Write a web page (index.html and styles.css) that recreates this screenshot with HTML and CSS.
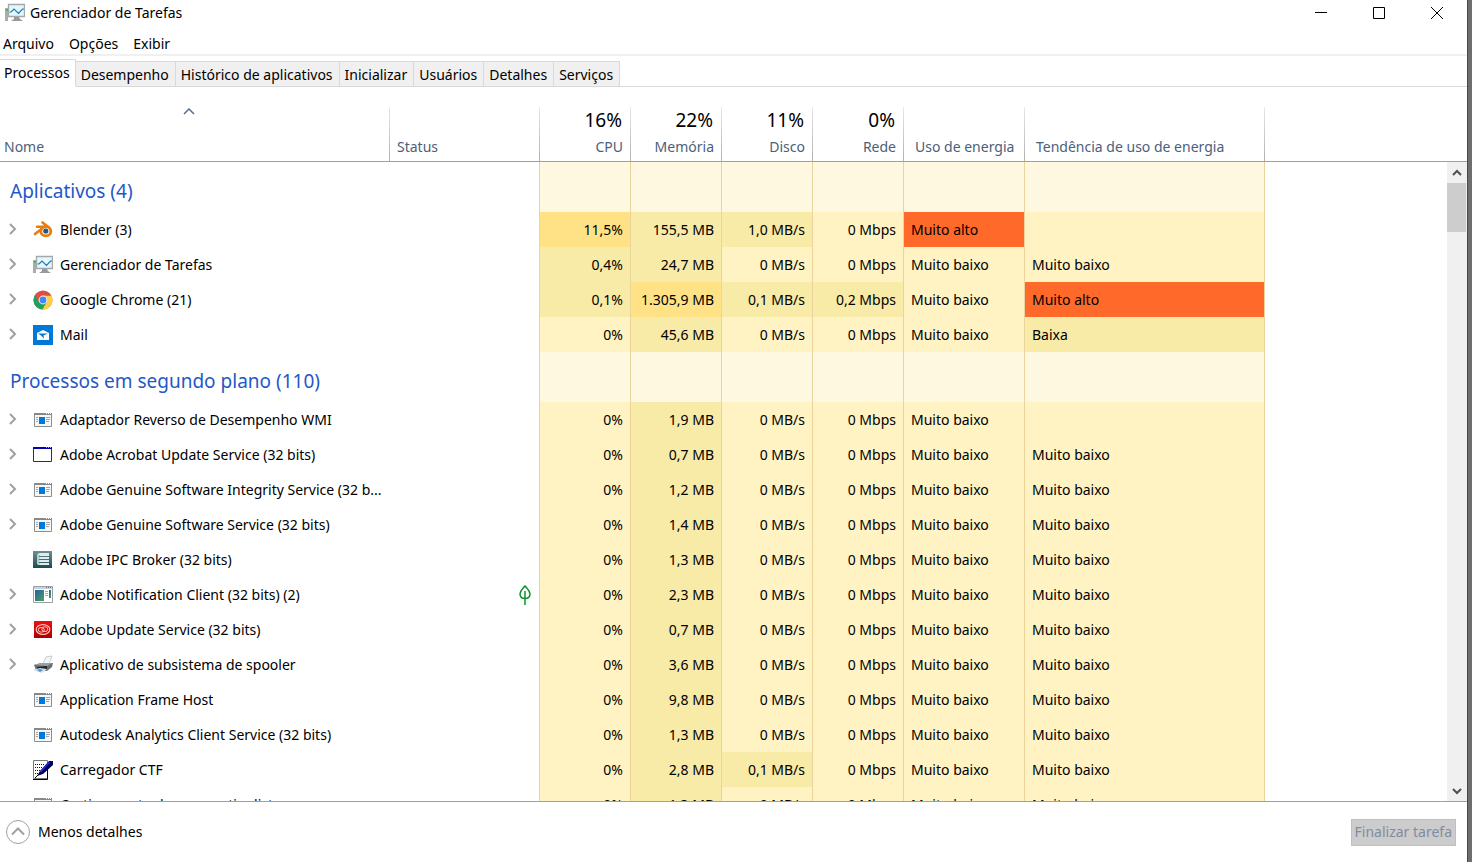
FILE: index.html
```html
<!DOCTYPE html>
<html lang="pt-BR">
<head>
  <meta charset="UTF-8">
  <meta name="viewport" content="width=device-width, initial-scale=1.0">
  <title>Gerenciador de Tarefas</title>
  <link rel="stylesheet" href="styles.css">
</head>
<body>
  <!-- Icon set -->
  <svg class="defs" width="0" height="0" aria-hidden="true">
    <linearGradient id="teal" x1="0" y1="0" x2="0" y2="1">
      <stop offset="0" stop-color="#6b9094"/><stop offset="1" stop-color="#214a50"/>
    </linearGradient>
    <linearGradient id="bluegreen" x1="0" y1="0" x2="1" y2="1">
      <stop offset="0" stop-color="#2560a8"/><stop offset="1" stop-color="#4ba05a"/>
    </linearGradient>
    <linearGradient id="red" x1="0" y1="0" x2="0" y2="1">
      <stop offset="0" stop-color="#f01010"/><stop offset="1" stop-color="#a80000"/>
    </linearGradient>

    <symbol id="chevron" viewBox="0 0 8 12">
      <path d="M1.500 1 6.500 6l-5 5" fill="none" stroke="#a0a0a0" stroke-width="2"/>
    </symbol>
    <symbol id="taskmgr" viewBox="0 0 20 20">
      <path d="M0 5h3v13H0z" fill="#a9adb0"/>
      <path d="M1 6h2v2H1z" fill="#35c135"/>
      <path d="M3.500 1.500h16v12h-16z" fill="#e6f6fd" stroke="#a4a8ab" stroke-width="1.400"/>
      <path d="M9 14h5l1 2 3 2H6l3-2z" fill="#969a9d"/>
      <path d="M4.500 9h1.500l3-3 4.500 4.500 4-4.500h1.500" fill="none" stroke="#187fb5" stroke-width="1.200"/>
    </symbol>
    <symbol id="blender" viewBox="0 0 20 20">
      <ellipse cx="12.800" cy="11.300" rx="5" ry="4.600" fill="#fff" stroke="#e87d0d" stroke-width="2.800"/>
      <path d="M9.500 2.500 16 7.500M4 6.800h9.500M2 14 9.500 8.200" fill="none" stroke="#e87d0d" stroke-width="2.600" stroke-linecap="round"/>
      <circle cx="12.800" cy="11" r="2.600" fill="#235785"/>
    </symbol>
    <symbol id="chrome" viewBox="0 0 20 20">
      <circle cx="10" cy="10" r="9.500" fill="#dd4f43"/>
      <path d="M1.800 5.200A9.500 9.500 0 0 0 9.300 19.500L13.700 12.200 10 10 5.800 12z" fill="#1da160"/>
      <path d="M9.300 19.500A9.500 9.500 0 0 0 18.500 5.800H10L13.700 12.200z" fill="#ffce44"/>
      <circle cx="10" cy="10" r="4.400" fill="#f1f1f1"/>
      <circle cx="10" cy="10" r="3.400" fill="#4587f3"/>
    </symbol>
    <symbol id="mail" viewBox="0 0 20 20">
      <path d="M0 0h20v20H0z" fill="#0078d7"/>
      <path d="M4 8 10 5l6 3v7H4z" fill="#fff"/>
      <path d="M5 8.500h10l-4.500 2 .5 3-3-3z" fill="#0078d7"/>
    </symbol>
    <symbol id="app" viewBox="0 0 20 20">
      <path d="M1.500 3.500h17v13h-17z" fill="#f7f7f7" stroke="#8b8f92"/>
      <path d="M1 3h18v2H1z" fill="#85898c"/>
      <path d="M13 3h1v1h-1zM15 3h1v1h-1zM17 3h1v1h-1z" fill="#fff"/>
      <path d="M6 7h6v7H6z" fill="#0078d7"/>
      <path d="M3 7.500h2M3 9.500h2M3 11.500h2M13 7.500h4M13 9.500h4M13 11.500h3" stroke="#a0a4a6"/>
    </symbol>
    <symbol id="window" viewBox="0 0 20 20">
      <path d="M.5 2.500h18v14H.5z" fill="#fff" stroke="#26268c"/>
      <path d="M0 2h19v2H0z" fill="#0000b8"/>
      <path d="M13 2h1v1h-1zM15 2h1v1h-1zM17 2h1v1h-1z" fill="#8fb4ff"/>
    </symbol>
    <symbol id="broker" viewBox="0 0 20 20">
      <path d="M0 1h19v17H0z" fill="url(#teal)"/>
      <path d="m4 4 3-1h9v3H7zM4 8l3-1h9v2H7zM4 11l3-1h9v2H7zM4 14l3-1h9v2H7z" fill="#e0ecec"/>
      <path d="M4 4v10l2 1V5z" fill="#b5cccc"/>
    </symbol>
    <symbol id="notify" viewBox="0 0 20 20">
      <path d="M.5 1.500h19v16H.5z" fill="#fff" stroke="#9aa0a6"/>
      <path d="M1 2h18v2H1z" fill="#c8d3df"/>
      <path d="M13 2h1v1h-1zM15 2h1v1h-1zM17 2h1v1h-1z" fill="#587498"/>
      <path d="M2 5h9v11H2z" fill="url(#bluegreen)"/>
      <path d="M12 6.500h3M12 8.500h3M12 10.500h3" stroke="#a9a9a9"/>
      <path d="M16 5h2v8h-2z" fill="url(#bluegreen)"/>
    </symbol>
    <symbol id="cloud" viewBox="0 0 20 20">
      <path d="M1 1h18v17H1z" fill="url(#red)"/>
      <ellipse cx="10" cy="9.500" rx="6.800" ry="4.800" fill="none" stroke="#ffc3bd" stroke-width="1.200"/>
      <ellipse cx="8.300" cy="9.800" rx="3" ry="2.400" fill="none" stroke="#ffc3bd"/>
      <ellipse cx="11.800" cy="9.200" rx="3" ry="2.400" fill="none" stroke="#ffc3bd"/>
    </symbol>
    <symbol id="printer" viewBox="0 0 20 20">
      <path d="m10 9 3-7 6-1-3 8z" fill="#f4f6f7" stroke="#b5b9bd" stroke-width=".7"/>
      <path d="m1 10 7-2h12l-1 4-5 4-11-1z" fill="#6a6f74"/>
      <path d="m1 10 7-2h11l-5 3z" fill="#9ba0a4"/>
      <path d="m4 12 10-1v3l-9 1z" fill="#202428"/>
      <path d="m0 15 7-2 7 1-5 4z" fill="#d6dde2"/>
      <path d="m4 15 3-1 3 1-3 2z" fill="#4398d8"/>
    </symbol>
    <symbol id="ctf" viewBox="0 0 20 20">
      <path d="M.5.5h14v18H.5z" fill="#fff" stroke="#777"/>
      <path d="M0 19.500h14.500V9" fill="none" stroke="#000"/>
      <path d="M2 4.500h10M2 7.500h8M2 10.500h5M2 13.500h3" stroke="#111" stroke-dasharray="1 1"/>
      <path d="m4 16 3-5 9-10h4v4l-10 9z" fill="#000050"/>
      <path d="m7.500 12 9-10" stroke="#2828f0" stroke-width="1.500"/>
      <path d="m2 18 3-3" stroke="#000"/>
    </symbol>
    <symbol id="leaf" viewBox="0 0 14 20">
      <path d="M7 1C4.500 4 2 5.500 2 9c0 3 2 4.500 5 4.500s5-1.500 5-4.500c0-3.500-2.500-5-5-8zM7 6v14" fill="none" stroke="#0c9431" stroke-width="1.500"/>
    </symbol>
  </svg>

  <div class="window">
    <header class="titlebar">
      <svg class="icon"><use href="#taskmgr"/></svg>
      <h1>Gerenciador de Tarefas</h1>
      <div class="controls">
        <button aria-label="Minimizar"><svg width="12" height="12"><path d="M0 5.500h12"/></svg></button>
        <button aria-label="Maximizar"><svg width="12" height="12"><path d="M.5.5h11v11H.5z"/></svg></button>
        <button aria-label="Fechar"><svg width="12" height="12"><path d="m0 0 12 12M12 0 0 12"/></svg></button>
      </div>
    </header>

    <nav class="menu">
      <button>Arquivo</button>
      <button>Opções</button>
      <button>Exibir</button>
    </nav>

    <div class="tabs" role="tablist">
      <button class="tab active" role="tab" aria-selected="true">Processos</button>
      <button class="tab" role="tab">Desempenho</button>
      <button class="tab" role="tab">Histórico de aplicativos</button>
      <button class="tab" role="tab">Inicializar</button>
      <button class="tab" role="tab">Usuários</button>
      <button class="tab" role="tab">Detalhes</button>
      <button class="tab" role="tab">Serviços</button>
    </div>

    <main class="pane">
      <div class="list">
        <table>
          <colgroup>
            <col class="c-name"><col class="c-status"><col class="c-num"><col class="c-num"><col class="c-num"><col class="c-num"><col class="c-power"><col class="c-trend"><col>
          </colgroup>
          <thead>
            <tr>
              <th class="sorted"><span class="total"><svg width="12" height="7"><path d="m1 6 5-5 5 5"/></svg></span>Nome</th>
              <th class="status"><span class="total"></span>Status</th>
              <th class="num"><span class="total">16%</span>CPU</th>
              <th class="num"><span class="total">22%</span>Memória</th>
              <th class="num"><span class="total">11%</span>Disco</th>
              <th class="num"><span class="total">0%</span>Rede</th>
              <th class="power"><span class="total"></span>Uso de energia</th>
              <th class="power"><span class="total"></span>Tendência de uso de energia</th>
              <td></td>
            </tr>
          </thead>
          <tbody>
            <tr class="group"><th colspan="2">Aplicativos (4)</th><td></td><td></td><td></td><td></td><td></td><td></td><td></td></tr>
            <tr>
              <td><div class="name"><svg class="chev"><use href="#chevron"/></svg><svg class="icon"><use href="#blender"/></svg>Blender (3)</div></td>
              <td></td><td class="hot">11,5%</td><td class="warm">155,5 MB</td><td class="warm">1,0 MB/s</td><td>0 Mbps</td><td class="max">Muito alto</td><td></td><td></td>
            </tr>
            <tr>
              <td><div class="name"><svg class="chev"><use href="#chevron"/></svg><svg class="icon"><use href="#taskmgr"/></svg>Gerenciador de Tarefas</div></td>
              <td></td><td class="warm">0,4%</td><td class="warm">24,7 MB</td><td>0 MB/s</td><td>0 Mbps</td><td>Muito baixo</td><td>Muito baixo</td><td></td>
            </tr>
            <tr>
              <td><div class="name"><svg class="chev"><use href="#chevron"/></svg><svg class="icon"><use href="#chrome"/></svg>Google Chrome (21)</div></td>
              <td></td><td class="warm">0,1%</td><td class="hot">1.305,9 MB</td><td class="warm">0,1 MB/s</td><td class="warm">0,2 Mbps</td><td>Muito baixo</td><td class="max">Muito alto</td><td></td>
            </tr>
            <tr>
              <td><div class="name"><svg class="chev"><use href="#chevron"/></svg><svg class="icon"><use href="#mail"/></svg>Mail</div></td>
              <td></td><td>0%</td><td class="warm">45,6 MB</td><td>0 MB/s</td><td>0 Mbps</td><td>Muito baixo</td><td class="warm">Baixa</td><td></td>
            </tr>

            <tr class="group"><th colspan="2">Processos em segundo plano (110)</th><td></td><td></td><td></td><td></td><td></td><td></td><td></td></tr>
            <tr>
              <td><div class="name"><svg class="chev"><use href="#chevron"/></svg><svg class="icon"><use href="#app"/></svg>Adaptador Reverso de Desempenho WMI</div></td>
              <td></td><td>0%</td><td class="warm">1,9 MB</td><td>0 MB/s</td><td>0 Mbps</td><td>Muito baixo</td><td></td><td></td>
            </tr>
            <tr>
              <td><div class="name"><svg class="chev"><use href="#chevron"/></svg><svg class="icon"><use href="#window"/></svg>Adobe Acrobat Update Service (32 bits)</div></td>
              <td></td><td>0%</td><td class="warm">0,7 MB</td><td>0 MB/s</td><td>0 Mbps</td><td>Muito baixo</td><td>Muito baixo</td><td></td>
            </tr>
            <tr>
              <td><div class="name"><svg class="chev"><use href="#chevron"/></svg><svg class="icon"><use href="#app"/></svg>Adobe Genuine Software Integrity Service (32 b...</div></td>
              <td></td><td>0%</td><td class="warm">1,2 MB</td><td>0 MB/s</td><td>0 Mbps</td><td>Muito baixo</td><td>Muito baixo</td><td></td>
            </tr>
            <tr>
              <td><div class="name"><svg class="chev"><use href="#chevron"/></svg><svg class="icon"><use href="#app"/></svg>Adobe Genuine Software Service (32 bits)</div></td>
              <td></td><td>0%</td><td class="warm">1,4 MB</td><td>0 MB/s</td><td>0 Mbps</td><td>Muito baixo</td><td>Muito baixo</td><td></td>
            </tr>
            <tr>
              <td><div class="name"><svg class="chev"></svg><svg class="icon"><use href="#broker"/></svg>Adobe IPC Broker (32 bits)</div></td>
              <td></td><td>0%</td><td class="warm">1,3 MB</td><td>0 MB/s</td><td>0 Mbps</td><td>Muito baixo</td><td>Muito baixo</td><td></td>
            </tr>
            <tr>
              <td><div class="name"><svg class="chev"><use href="#chevron"/></svg><svg class="icon"><use href="#notify"/></svg>Adobe Notification Client (32 bits) (2)</div></td>
              <td><svg class="leaf"><use href="#leaf"/></svg></td><td>0%</td><td class="warm">2,3 MB</td><td>0 MB/s</td><td>0 Mbps</td><td>Muito baixo</td><td>Muito baixo</td><td></td>
            </tr>
            <tr>
              <td><div class="name"><svg class="chev"><use href="#chevron"/></svg><svg class="icon"><use href="#cloud"/></svg>Adobe Update Service (32 bits)</div></td>
              <td></td><td>0%</td><td class="warm">0,7 MB</td><td>0 MB/s</td><td>0 Mbps</td><td>Muito baixo</td><td>Muito baixo</td><td></td>
            </tr>
            <tr>
              <td><div class="name"><svg class="chev"><use href="#chevron"/></svg><svg class="icon"><use href="#printer"/></svg>Aplicativo de subsistema de spooler</div></td>
              <td></td><td>0%</td><td class="warm">3,6 MB</td><td>0 MB/s</td><td>0 Mbps</td><td>Muito baixo</td><td>Muito baixo</td><td></td>
            </tr>
            <tr>
              <td><div class="name"><svg class="chev"></svg><svg class="icon"><use href="#app"/></svg>Application Frame Host</div></td>
              <td></td><td>0%</td><td class="warm">9,8 MB</td><td>0 MB/s</td><td>0 Mbps</td><td>Muito baixo</td><td>Muito baixo</td><td></td>
            </tr>
            <tr>
              <td><div class="name"><svg class="chev"></svg><svg class="icon"><use href="#app"/></svg>Autodesk Analytics Client Service (32 bits)</div></td>
              <td></td><td>0%</td><td class="warm">1,3 MB</td><td>0 MB/s</td><td>0 Mbps</td><td>Muito baixo</td><td>Muito baixo</td><td></td>
            </tr>
            <tr>
              <td><div class="name"><svg class="chev"></svg><svg class="icon"><use href="#ctf"/></svg>Carregador CTF</div></td>
              <td></td><td>0%</td><td class="warm">2,8 MB</td><td class="warm">0,1 MB/s</td><td>0 Mbps</td><td>Muito baixo</td><td>Muito baixo</td><td></td>
            </tr>
            <tr>
              <td><div class="name"><svg class="chev"></svg><svg class="icon"><use href="#app"/></svg>Cortinamento de aperceptionlist</div></td>
              <td></td><td>0%</td><td class="warm">1,3 MB</td><td>0 MB/s</td><td>0 Mbps</td><td>Muito baixo</td><td>Muito baixo</td><td></td>
            </tr>
          </tbody>
        </table>
      </div>
      <div class="scroll">
        <div class="scrollbar">
          <button aria-label="Rolar para cima"><svg width="10" height="8"><path d="m1 6 4-4 4 4"/></svg></button>
          <div class="thumb"></div>
          <button class="down" aria-label="Rolar para baixo"><svg width="10" height="8"><path d="m1 2 4 4 4-4"/></svg></button>
        </div>
      </div>
    </main>

    <footer class="bottom">
      <button class="fewer">
        <svg width="24" height="24"><circle cx="12" cy="12" r="11.500"/><path d="m6 14.500 6-6 6 6"/></svg>
        Menos detalhes
      </button>
      <button class="end" disabled>Finalizar tarefa</button>
    </footer>
  </div>
</body>
</html>
```
FILE: styles.css
```css
* {
  box-sizing: border-box;
}
body {
  margin: 0;
  background: #6e6e6e;
  font-family: "Noto Sans", "Open Sans", sans-serif;
  font-size: 14px;
  line-height: 20px;
  color: #000;
}
button {
  font: inherit;
  color: inherit;
  background: none;
  border: none;
  padding: 0;
}
svg {
  display: block;
  flex: none;
}
.defs {
  position: absolute;
}
.window {
  display: flex;
  flex-direction: column;
  height: 100vh;
  margin-right: 4px;
  background: #fff;
  border-right: 1px solid #484848;
}
.icon {
  width: 20px;
  height: 20px;
}

/* title bar */
.titlebar {
  display: flex;
  align-items: center;
  height: 25px;
  padding-left: 5px;
}
.titlebar h1 {
  flex: 1;
  margin: 0 0 0 5px;
  font-size: 14px;
  font-weight: normal;
}
.controls {
  display: flex;
  padding-right: 1px;
}
.controls button {
  display: flex;
  align-items: center;
  justify-content: center;
  width: 58px;
  height: 24px;
}
.controls path {
  fill: none;
  stroke: #000;
}

.menu {
  display: flex;
  gap: 15px;
  height: 31px;
  padding: 9px 3px 0;
  border-bottom: 2px solid #f0f0f0;
}
.menu button {
  height: 20px;
}

/* tabs */
.tabs {
  display: flex;
  align-items: flex-end;
  height: 31px;
  border-bottom: 1px solid #d9d9d9;
}
.tab {
  height: 26px;
  margin-bottom: -1px;
  padding: 1px 6px 0 5px;
  background: #f0f0f0;
  border: 1px solid #d9d9d9;
  border-left: none;
}
.tab.active {
  height: 28px;
  padding: 0 5px 1px 4px;
  background: #fff;
  border-bottom-color: #fff;
}

/* process list */
.pane {
  display: flex;
  flex: 1;
  min-height: 0;
  padding-top: 20px;
  border-bottom: 1px solid #a0a0a0;
}
.list {
  flex: 1;
  overflow: hidden;
}
table {
  width: 100%;
  table-layout: fixed;
  border-spacing: 0;
}
.c-name { width: 390px; }
.c-status { width: 150px; }
.c-num { width: 91px; }
.c-power { width: 121px; }
.c-trend { width: 240px; }

th {
  font-weight: normal;
  text-align: left;
}
td {
  padding: 0 7px;
}
thead th {
  height: 55px;
  padding: 0 4px;
  color: #4c607a;
  vertical-align: top;
  white-space: nowrap;
  border-bottom: 1px solid #a0a0a0;
  background: linear-gradient(#e8e8e8, #b0b0b0) right / 1px 100% no-repeat;
}
thead td {
  border-bottom: 1px solid #a0a0a0;
}
thead .status {
  padding-left: 7px;
}
thead .num {
  padding-right: 8px;
  text-align: right;
}
thead .power {
  padding-left: 11px;
}
.total {
  display: block;
  height: 30px;
  padding-right: 1px;
  font-size: 19px;
  line-height: 26px;
  color: #000;
}
.sorted .total {
  padding: 1px 13px 0 0;
}
.sorted .total svg {
  margin: 0 auto;
}
.sorted path {
  fill: none;
  stroke: #5a6b90;
  stroke-width: 1.5;
}

tbody td {
  height: 35px;
  white-space: nowrap;
}
tbody td:nth-last-child(-n+7):not(:last-child) {
  background-color: #fff3c4;
  border-right: 1px solid #ebd49c;
}
tbody td:nth-last-child(n+4):nth-last-child(-n+7) {
  text-align: right;
}
tbody td:nth-last-child(8) {
  border-right: 1px solid #ebd49c;
}
tbody .group td:not(:last-child) {
  background-color: #fff8e1;
}
.group th {
  height: 50px;
  padding: 8px 10px 0;
  font-size: 19px;
  color: #1f58c7;
  border-right: 1px solid #ebd49c;
}
tbody td.warm:nth-child(n) { background-color: #f8eaa7; }
tbody td.hot:nth-child(n) { background-color: #ffe285; }
tbody td.max:nth-child(n) { background-color: #ff6a2a; }

.name {
  display: flex;
  align-items: center;
}
.name .icon {
  margin: 0 7px 0 16px;
}
.chev {
  width: 9px;
  height: 12px;
  margin: 0 0 2px 1px;
}
.leaf {
  width: 14px;
  height: 20px;
  margin-left: auto;
}

/* scrollbar */
.scroll {
  display: flex;
  width: 20px;
  padding-top: 54px;
}
.scrollbar {
  display: flex;
  flex: 1;
  flex-direction: column;
  background: #f0f0f0;
  border-top: 1px solid #a0a0a0;
}
.scrollbar button {
  display: flex;
  align-items: center;
  justify-content: center;
  height: 21px;
}
.scrollbar .down {
  margin-top: auto;
}
.scrollbar path {
  fill: none;
  stroke: #505050;
  stroke-width: 2;
}
.thumb {
  height: 49px;
  margin-right: 1px;
  background: #cdcdcd;
}

/* footer */
.bottom {
  display: flex;
  align-items: center;
  justify-content: space-between;
  height: 60px;
  padding: 0 11px 0 6px;
}
.fewer {
  display: flex;
  align-items: center;
  gap: 8px;
}
.fewer svg {
  fill: none;
  stroke: #a0a0a0;
}
.fewer path {
  stroke-width: 2;
}
.end {
  height: 27px;
  padding: 0 3px;
  color: #838ba0;
  background: #ccc;
  border: 1px solid #bfbfbf;
}
```
